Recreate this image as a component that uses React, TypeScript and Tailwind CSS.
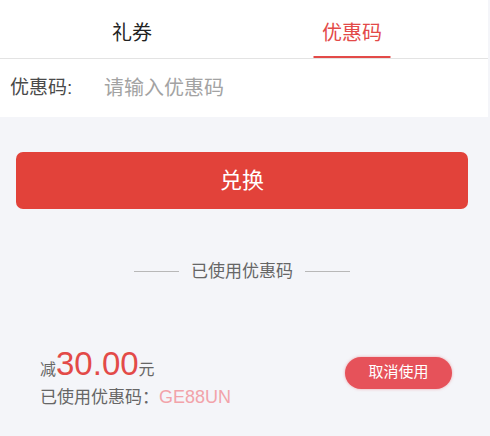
import React from "react";

export default function App() {
  const font = { fontFamily: '"Liberation Sans", "Noto Sans CJK SC", sans-serif' };
  return (
    <div className="w-[490px] h-[436px] bg-[#f4f5f9] overflow-hidden" style={font}>
      <div className="w-[488px]">
        {/* tabs */}
        <div className="bg-white border-b border-[#e3e3e3] flex pl-[22px] h-[59px]">
          <div className="w-[220px] h-[58px] flex items-center justify-center pt-[7px] text-[20px] text-[#222]">
            礼券
          </div>
          <div className="relative w-[220px] h-[58px] flex items-center justify-center pt-[7px] text-[20px] text-[#e34a48]">
            优惠码
            <div className="absolute bottom-0 left-1/2 -translate-x-1/2 w-[77px] h-[2px] bg-[#e34a48]" />
          </div>
        </div>
        {/* input row */}
        <div className="bg-white h-[58px] flex items-center pl-[10px]">
          <span className="w-[94px] text-[19px] text-[#4a4a4a]">优惠码:</span>
          <span className="text-[20px] text-[#a3a3a3]">请输入优惠码</span>
        </div>
        {/* button */}
        <div className="mt-[35px] ml-[16px] w-[452px] h-[57px] rounded-[7px] bg-[#e2423a] flex items-center justify-center text-white text-[22px]">
          兑换
        </div>
        {/* divider */}
        <div className="mt-[50px] flex items-center justify-center gap-[12px] pr-[4px]">
          <div className="w-[45px] h-px bg-[#b8b8b8]" />
          <span className="text-[17px] text-[#666]">已使用优惠码</span>
          <div className="w-[45px] h-px bg-[#b8b8b8]" />
        </div>
        {/* used coupon */}
        <div className="mt-[62px] flex items-center justify-between pl-[40px] pr-[36px]">
          <div className="flex flex-col">
            <div className="flex items-baseline leading-none">
              <span className="text-[16px] text-[#666]">减</span>
              <span className="text-[33px] text-[#e34a48]">30.00</span>
              <span className="text-[16px] text-[#666]">元</span>
            </div>
            <div className="mt-[6px] text-[17px] text-[#666] leading-[22px]">
              已使用优惠码：<span className="text-[18px] text-[#f2a3aa]">GE88UN</span>
            </div>
          </div>
          <div className="w-[107px] h-[32px] rounded-full bg-[#e6525a] shadow-[0_0_3px_rgba(230,82,90,0.5)] flex items-center justify-center text-white text-[15px] -mt-[10px]">
            取消使用
          </div>
        </div>
      </div>
    </div>
  );
}
